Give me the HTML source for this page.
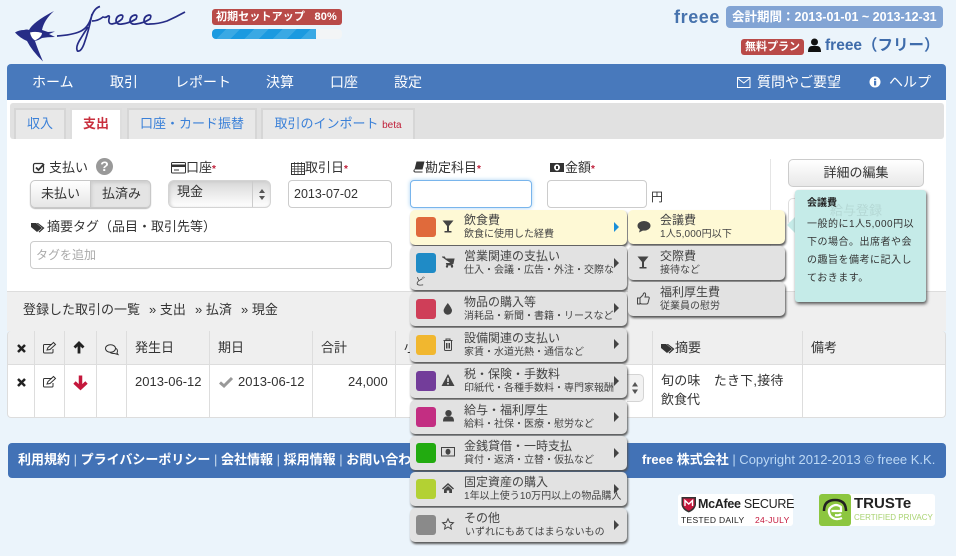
<!DOCTYPE html>
<html lang="ja"><head><meta charset="utf-8"><title>freee</title>
<style>
*{box-sizing:border-box}
html,body{margin:0;padding:0}
body{width:956px;height:556px;overflow:hidden;position:relative;background:#ebf4fb;font-family:"Liberation Sans","Noto Sans CJK JP",sans-serif;font-size:13px;color:#333;line-height:18px}
.a{position:absolute;white-space:nowrap}
.nav{left:7px;top:64px;width:939px;height:36px;background:#4879bc;border-radius:4px 4px 0 0}
.nt{color:#fff;font-size:14px;top:73px;line-height:18px}
.tab{top:108px;height:31px;background:#e8e8e8;border:2px solid #d6d6d6;border-bottom:0;color:#3a80d8;text-align:center;line-height:28px;font-size:13px}
.lbl{font-size:13px;line-height:18px;color:#333}
.req{color:#c0203a;font-size:10px;font-weight:bold}
.inp{background:#fff;border:1px solid #ccc;border-radius:4px}
.th{top:331px;height:34px;background:#efefef;border-right:1px solid #ddd;border-bottom:1px solid #ddd}
.td{top:365px;height:53px;background:#fff;border-right:1px solid #ddd;border-bottom:1px solid #ddd}
.t{font-size:13px;line-height:18px;color:#333}
.mi{left:410px;width:217px;background:#e2e2e2;border-radius:5px;box-shadow:1px 2px 2px #555;}
.mi.on,.si.on{background:#fef9d5}
.sw{left:416px;width:20px;height:20px;border-radius:3px}
.mt{left:464px;font-size:12px;line-height:14px;color:#444}
.ms{left:464px;font-size:10px;line-height:12px;color:#444}
.ar{width:0;height:0;border-left:5px solid #444;border-top:5px solid transparent;border-bottom:5px solid transparent}
.si{left:628px;width:157px;height:34px;background:#e2e2e2;border-radius:5px;box-shadow:1px 2px 2px #555}
svg{position:absolute;overflow:visible}
.ft{color:#fff;font-size:13px;font-weight:bold;line-height:16px}
</style></head><body>

<svg style="left:0;top:0" width="200" height="64" viewBox="0 0 200 64">
<path d="M15 32.500 Q19 30 24 30 Q27 29 29 30 Q33 22 54 11 Q44 20 42 30 L48 32 L55 31.500 L49 34 L55 37 Q47 37 42 38 Q39 40 35 41 Q38 50 43 61.500 Q32 51 27 41 Q20 38 15 32.500Z" fill="#262c86"/>
<path d="M30 32.500 Q36 31 42 33 Q42 37 35 40.500 Q31 38 30 32.500Z" fill="#fff"/>
<path d="M57 36 Q72 35 80 31.500 Q88 28 91 18 Q94 8 100 6.500 M92 14 Q89 30 84 44 Q81 52 77.500 51 Q75 47 81 38 Q84 33 88 27 M92 21 Q98 21 103 17 Q106 18 108 16 Q110 15 109 19 Q108 24 112 24 Q118 23 122 19 Q124 15 121 15 Q116 16 116 21 Q117 25 122 24 Q130 23 136 19 Q138 15 135 15 Q130 16 130 21 Q131 25 136 24 Q144 23 150 19 Q152 15 149 15 Q144 16 144 21 Q145 25 150 24 Q158 24 167 21 Q176 17 185 12" fill="none" stroke="#262c86" stroke-width="1.700"/>
</svg>

<div class="a" style="left:212px;top:9px;width:130px;height:16px;background:#b94a48;border-radius:3px;color:#fff;font-size:11px;font-weight:bold;line-height:16px;padding-left:4px;letter-spacing:.12px">初期セットアップ&nbsp;&nbsp;&nbsp;80%</div>
<div class="a" style="left:212px;top:29px;width:130px;height:10px;background:#f3f5f6;border-radius:4px;overflow:hidden"><div style="width:104px;height:10px;background:repeating-linear-gradient(135deg,#1b9ae0 0 10px,#3aa9e4 10px 20px)"></div></div>

<div class="a" style="left:674px;top:6px;font-size:18px;font-weight:bold;color:#4672ad;line-height:22px;letter-spacing:.6px">freee</div>
<div class="a" style="left:726px;top:6px;width:217px;height:22px;background:#82a4d4;border-radius:4px;color:#fff;font-size:12.500px;font-weight:bold;line-height:22px;padding-left:6px">会計期間：2013-01-01 ~ 2013-12-31</div>
<div class="a" style="left:741px;top:39px;width:63px;height:16px;background:#b94a48;border-radius:3px;color:#fff;font-size:11px;font-weight:bold;line-height:16px;text-align:center">無料プラン</div>
<svg style="left:808px;top:38px" width="14" height="15"><circle cx="6.500" cy="4" r="3.500" fill="#111"/><path d="M0 14 Q0 8 4 8 L9 8 Q13 8 13 14Z" fill="#111"/></svg>
<div class="a" style="left:825px;top:36px;font-size:15.500px;font-weight:bold;color:#3f6cab;line-height:20px">freee（フリー）</div>

<div class="a nav"></div>
<div class="a nt" style="left:32px">ホーム</div>
<div class="a nt" style="left:110px">取引</div>
<div class="a nt" style="left:175px">レポート</div>
<div class="a nt" style="left:266px">決算</div>
<div class="a nt" style="left:330px">口座</div>
<div class="a nt" style="left:394px">設定</div>
<svg style="left:737px;top:77px" width="14" height="11"><rect x=".5" y=".5" width="12.500" height="10" fill="none" stroke="#fff"/><path d="M1 1.500 L6.750 6 L12.500 1.500" fill="none" stroke="#fff"/></svg>
<div class="a nt" style="left:757px">質問やご要望</div>
<svg style="left:869px;top:76px" width="12" height="12"><circle cx="6" cy="6" r="5.500" fill="#fff"/><rect x="5" y="5" width="2.200" height="4.500" fill="#4879bc"/><rect x="5" y="2.500" width="2.200" height="1.800" fill="#4879bc"/></svg>
<div class="a nt" style="left:889px">ヘルプ</div>

<div class="a" style="left:7px;top:100px;width:939px;height:191px;background:#fff"></div>
<div class="a" style="left:10px;top:103px;width:934px;height:36px;background:#e1e1e1;border-radius:3px"></div>
<div class="a tab" style="left:14px;width:52px">収入</div>
<div class="a tab" style="left:70px;width:52px;background:#fff;color:#c9303e;font-weight:bold;border-color:#dedede">支出</div>
<div class="a tab" style="left:127px;width:130px">口座・カード振替</div>
<div class="a tab" style="left:261px;width:154px">取引のインポート <span style="color:#c0203a;font-size:10px">beta</span></div>

<svg style="left:33px;top:162px" width="13" height="12"><rect x=".5" y="1.500" width="10" height="9" rx="1.500" fill="none" stroke="#333" stroke-width="1.200"/><path d="M3 5.500 L5.500 8 L11 2" fill="none" stroke="#333" stroke-width="1.800"/></svg>
<div class="a lbl" style="left:49px;top:159px">支払い</div>
<div class="a" style="left:96px;top:158px;width:17px;height:17px;border-radius:50%;background:#999;color:#fff;font-weight:bold;font-size:14px;line-height:17px;text-align:center">?</div>
<div class="a" style="left:30px;top:180px;width:121px;height:28px;border:1px solid #c8c8c8;border-radius:5px;background:linear-gradient(#fff,#e6e6e6);box-shadow:0 1px 1px #bbb"></div>
<div class="a" style="left:90px;top:180px;width:61px;height:28px;border:1px solid #c8c8c8;border-radius:0 5px 5px 0;background:#e4e4e4;box-shadow:inset 1px 2px 3px #ccc"></div>
<div class="a t" style="left:41px;top:185px">未払い</div>
<div class="a t" style="left:102px;top:185px">払済み</div>

<svg style="left:171px;top:162px" width="15" height="12"><rect x=".5" y=".5" width="14" height="10.500" rx="1" fill="none" stroke="#333"/><rect x="1" y="2.500" width="13" height="2.500" fill="#333"/><path d="M3 8 H8" stroke="#333"/></svg>
<div class="a lbl" style="left:186px;top:159px">口座<span class="req">*</span></div>
<div class="a" style="left:168px;top:180px;width:103px;height:28px;border:1px solid #d4d4d4;border-radius:6px;background:linear-gradient(#d8d8d8,#fff);box-shadow:inset 1px 1px 3px #ccc"></div>
<div class="a" style="left:252px;top:181px;width:1px;height:26px;background:#ccc"></div>
<div class="a t" style="left:177px;top:183px">現金</div>
<svg style="left:258px;top:189px" width="8" height="11"><path d="M4 0 L7 4 H1Z M4 11 L7 7 H1Z" fill="#555"/></svg>

<svg style="left:291px;top:162px" width="14" height="13"><rect x=".5" y="1.500" width="13" height="11" fill="none" stroke="#333"/><path d="M.5 4.500 H13.500 M.5 7 H13.500 M.5 9.500 H13.500 M3.500 0 V12 M7 0 V12 M10.500 0 V12" stroke="#333" stroke-width=".7"/></svg>
<div class="a lbl" style="left:305px;top:159px">取引日<span class="req">*</span></div>
<div class="a inp" style="left:288px;top:180px;width:104px;height:28px"></div>
<div class="a t" style="left:294px;top:185px;font-size:12.500px">2013-07-02</div>

<svg style="left:31px;top:222px" width="14" height="11"><path d="M0 1 H5 L11 6 L6 10 L0 5Z M7 1 L13.500 6 L8.500 10.500 L7.500 9.800 L11.500 6 L5.500 1Z" fill="#333"/></svg>
<div class="a lbl" style="left:47px;top:218px">摘要タグ（品目・取引先等）</div>
<div class="a inp" style="left:30px;top:241px;width:362px;height:28px"></div>
<div class="a" style="left:36px;top:246px;color:#aaa;font-size:12px;line-height:18px">タグを追加</div>

<svg style="left:413px;top:161px" width="12" height="12"><path d="M3.500 .5 H11.500 L9.500 8.500 H1.500Z" fill="#333"/><path d="M1.500 8.500 Q.2 10.500 2 11 H9.500" fill="none" stroke="#333"/></svg>
<div class="a lbl" style="left:425px;top:159px">勘定科目<span class="req">*</span></div>
<div class="a" style="left:410px;top:180px;width:122px;height:28px;border:1px solid #79b5ec;border-radius:4px;background:#fff;box-shadow:0 0 4px #a7d0f2"></div>
<svg style="left:550px;top:163px" width="15" height="10"><rect width="14" height="9" fill="#333"/><ellipse cx="7" cy="4.500" rx="3" ry="3.200" fill="#fff"/><rect x="6" y="3" width="2" height="3" fill="#333"/></svg>
<div class="a lbl" style="left:565px;top:159px">金額<span class="req">*</span></div>
<div class="a inp" style="left:547px;top:180px;width:100px;height:28px"></div>
<div class="a t" style="left:651px;top:188px;font-size:12px">円</div>

<div class="a" style="left:770px;top:159px;width:1px;height:132px;background:#e5e5e5"></div>
<div class="a" style="left:788px;top:159px;width:136px;height:28px;border:1px solid #ccc;border-radius:5px;background:linear-gradient(#fff,#e8e8e8);text-align:center;line-height:25px;font-size:13px">詳細の編集</div>
<div class="a" style="left:788px;top:198px;width:136px;height:28px;border:1px solid #ddd;border-radius:5px;background:#fff"></div>

<div class="a" style="left:7px;top:291px;width:939px;height:40px;background:#efefef;border-top:1px solid #ddd"></div>
<div class="a t" style="left:23px;top:301px">登録した取引の一覧</div>
<div class="a t" style="left:149px;top:301px">» 支出</div>
<div class="a t" style="left:195px;top:301px">» 払済</div>
<div class="a t" style="left:241px;top:301px">» 現金</div>

<div class="a th" style="left:7px;width:28px;border-left:1px solid #ddd;border-radius:4px 0 0 0"></div>
<div class="a th" style="left:35px;width:30px"></div>
<div class="a th" style="left:65px;width:32px"></div>
<div class="a th" style="left:97px;width:30px"></div>
<div class="a th" style="left:127px;width:83px"></div>
<div class="a th" style="left:210px;width:103px"></div>
<div class="a th" style="left:313px;width:83px"></div>
<div class="a th" style="left:396px;width:257px"></div>
<div class="a th" style="left:653px;width:150px"></div>
<div class="a th" style="left:803px;width:143px;border-radius:0 4px 0 0"></div>
<div class="a td" style="left:7px;width:28px;border-left:1px solid #ddd;border-radius:0 0 0 4px"></div>
<div class="a td" style="left:35px;width:30px"></div>
<div class="a td" style="left:65px;width:32px"></div>
<div class="a td" style="left:97px;width:30px"></div>
<div class="a td" style="left:127px;width:83px"></div>
<div class="a td" style="left:210px;width:103px"></div>
<div class="a td" style="left:313px;width:83px"></div>
<div class="a td" style="left:396px;width:257px"></div>
<div class="a td" style="left:653px;width:150px"></div>
<div class="a td" style="left:803px;width:143px;border-radius:0 0 4px 0"></div>

<svg style="left:17px;top:344px" width="9" height="9"><path d="M1 1 L8 8 M8 1 L1 8" stroke="#222" stroke-width="2.500"/></svg>
<svg style="left:17px;top:378px" width="9" height="9"><path d="M1 1 L8 8 M8 1 L1 8" stroke="#222" stroke-width="2.500"/></svg>
<svg style="left:43px;top:342px" width="13" height="12"><path d="M9 2.500 H1.500 Q.5 2.500 .5 3.500 V10 Q.5 11 1.500 11 H9 Q10 11 10 10 V7" fill="none" stroke="#333"/><path d="M4 8 L5 5.500 L10.500 .5 L12.500 2.500 L7 7.500Z" fill="none" stroke="#333"/></svg>
<svg style="left:43px;top:376px" width="13" height="12"><path d="M9 2.500 H1.500 Q.5 2.500 .5 3.500 V10 Q.5 11 1.500 11 H9 Q10 11 10 10 V7" fill="none" stroke="#333"/><path d="M4 8 L5 5.500 L10.500 .5 L12.500 2.500 L7 7.500Z" fill="none" stroke="#333"/></svg>
<svg style="left:73px;top:341px" width="12" height="13"><path d="M6 12.500 V2 M1.500 6.500 L6 2 L10.500 6.500" fill="none" stroke="#222" stroke-width="2.800"/></svg>
<svg style="left:73px;top:375px" width="15" height="15"><path d="M7.500 .5 V12.500 M1.500 7.500 L7.500 13 L13.500 7.500" fill="none" stroke="#c4183c" stroke-width="3.500"/></svg>
<svg style="left:105px;top:344px" width="14" height="11"><ellipse cx="5.500" cy="4.500" rx="5" ry="3.800" fill="#efefef" stroke="#333"/><path d="M10.500 4 Q13.500 6 12 9 L13 10.500 L9.500 9.500 Q6.500 9.500 5 8.300" fill="none" stroke="#333"/></svg>

<div class="a t" style="left:135px;top:339px">発生日</div>
<div class="a t" style="left:218px;top:339px">期日</div>
<div class="a t" style="left:321px;top:339px">合計</div>
<div class="a t" style="left:404px;top:339px">小</div>
<svg style="left:661px;top:343px" width="15" height="11"><path d="M0 1 H5 L11 6 L6 10 L0 5Z M7 1 L13.500 6 L8.500 10.500 L7.500 9.800 L11.500 6 L5.500 1Z" fill="#333"/></svg>
<div class="a t" style="left:675px;top:339px">摘要</div>
<div class="a t" style="left:811px;top:339px">備考</div>

<div class="a t" style="left:135px;top:373px">2013-06-12</div>
<svg style="left:219px;top:377px" width="14" height="11"><path d="M1 5.500 L5 9 L13 1" fill="none" stroke="#999" stroke-width="3"/></svg>
<div class="a t" style="left:238px;top:373px">2013-06-12</div>
<div class="a t" style="left:348px;top:373px">24,000</div>
<div class="a t" style="left:661px;top:372px;letter-spacing:.2px;font-size:13px">旬の味　たき下,接待</div>
<div class="a t" style="left:661px;top:391px">飲食代</div>
<div class="a" style="left:627px;top:374px;width:17px;height:28px;background:#f2f2f2;border:1px solid #d4d4d4;border-left:0;border-radius:0 5px 5px 0"></div>
<svg style="left:631px;top:382px" width="8" height="12"><path d="M4 0 L7 4.500 H1Z M4 12 L7 7.500 H1Z" fill="#555"/></svg>

<div class="a" style="left:8px;top:443px;width:938px;height:35px;background:#4272b6;border-radius:4px"></div>
<div class="a ft" style="left:18px;top:452px">利用規約 <span style="font-weight:normal;color:#cde">|</span> プライバシーポリシー <span style="font-weight:normal;color:#cde">|</span> 会社情報 <span style="font-weight:normal;color:#cde">|</span> 採用情報 <span style="font-weight:normal;color:#cde">|</span> お問い合わせ</div>
<div class="a ft" style="left:642px;top:452px">freee 株式会社 <span style="font-weight:normal;color:#bcd8f5">| Copyright 2012-2013 © freee K.K.</span></div>

<div class="a" style="left:678px;top:494px;width:115px;height:32px;background:#fff;border-radius:3px"></div>
<svg style="left:681px;top:496px" width="16" height="17"><path d="M.5 1 H15 V9 Q14 14 7.750 16.500 Q1.500 14 .5 9Z" fill="#333"/><path d="M2 2.500 H13.500 V9 Q12.500 12.500 7.750 14.800 Q3 12.500 2 9Z" fill="#c4183c"/><path d="M4 10 V4.500 L7.750 8 L11.500 4.500 V10" fill="none" stroke="#fff" stroke-width="1.400"/></svg>
<div class="a" style="left:698px;top:496px;font-size:12.500px;font-weight:bold;color:#222;line-height:16px;letter-spacing:-.3px">McAfee <span style="font-weight:normal">SECURE</span></div>
<div class="a" style="left:681px;top:515px;font-size:8.500px;color:#222;line-height:11px;letter-spacing:.3px">TESTED DAILY</div>
<div class="a" style="left:755px;top:515px;font-size:8.500px;color:#c4183c;line-height:11px;letter-spacing:.3px">24-JULY</div>

<div class="a" style="left:819px;top:494px;width:116px;height:32px;background:#fff;border-radius:3px"></div>
<div class="a" style="left:819px;top:494px;width:32px;height:32px;background:#8cc63f;border-radius:3px"></div>
<svg style="left:822px;top:497px" width="26" height="26"><path d="M2 14 Q2 3 13 3 Q24 3 24 14" fill="none" stroke="#222" stroke-width="2.500"/><path d="M20 21 Q13 24 8.500 19 Q5 13 9 10 Q14 6 19 10 L19 14 H9.500 M13 18 Q17 19 19 17" fill="none" stroke="#fff" stroke-width="2.200"/></svg>
<div class="a" style="left:854px;top:495px;font-size:15px;font-weight:bold;color:#222;line-height:18px">TRUSTe</div>
<div class="a" style="left:854px;top:513px;font-size:8px;color:#a9d372;line-height:10px">CERTIFIED PRIVACY</div>

<!-- main dropdown -->
<div class="a mi on" style="top:210px;height:35px"></div>
<div class="a mi" style="top:246px;height:44px"></div>
<div class="a mi" style="top:292px;height:34px"></div>
<div class="a mi" style="top:328px;height:34px"></div>
<div class="a mi" style="top:364px;height:34px"></div>
<div class="a mi" style="top:400px;height:34px"></div>
<div class="a mi" style="top:436px;height:34px"></div>
<div class="a mi" style="top:472px;height:34px"></div>
<div class="a mi" style="top:508px;height:34px"></div>

<div class="a sw" style="top:217px;background:#e06a3b"></div>
<div class="a sw" style="top:253px;background:#1f8bc6"></div>
<div class="a sw" style="top:299px;background:#cf3e58"></div>
<div class="a sw" style="top:335px;background:#f1b72f"></div>
<div class="a sw" style="top:371px;background:#733d9a"></div>
<div class="a sw" style="top:407px;background:#c32e82"></div>
<div class="a sw" style="top:443px;background:#22ab10"></div>
<div class="a sw" style="top:479px;background:#b3d133"></div>
<div class="a sw" style="top:515px;background:#8a8a8a"></div>

<svg style="left:442px;top:220px" width="12" height="13"><path d="M.5 .5 H11.500 L7 6 V11 H9.500 V12.500 H2.500 V11 H5 V6Z" fill="#444"/></svg>
<svg style="left:442px;top:256px" width="13" height="12"><path d="M0 1 H2.500 L3.500 3 H12 L11 7.500 H4.500 L5 9 H11" fill="#444" stroke="#444"/><circle cx="5" cy="10.500" r="1.200" fill="#444"/><circle cx="10" cy="10.500" r="1.200" fill="#444"/></svg>
<svg style="left:443px;top:302px" width="10" height="13"><path d="M4.800 1 Q9 6.500 9 8.500 A4.200 4.200 0 0 1 .6 8.500 Q.6 6.500 4.800 1Z" fill="#444"/></svg>
<svg style="left:443px;top:338px" width="10" height="13"><path d="M.5 2.500 H9.500 M3 2.500 V1 H7 V2.500 M1.500 2.500 V11.500 Q1.500 12.500 2.500 12.500 H7.500 Q8.500 12.500 8.500 11.500 V2.500 M3.500 5 V10.500 M5 5 V10.500 M6.500 5 V10.500" fill="none" stroke="#444"/></svg>
<svg style="left:441px;top:374px" width="14" height="12"><path d="M7 0 L13.500 12 H.5Z" fill="#444"/><rect x="6.200" y="3.800" width="1.600" height="4.200" fill="#e2e2e2"/><rect x="6.200" y="9" width="1.600" height="1.600" fill="#e2e2e2"/></svg>
<svg style="left:443px;top:410px" width="11" height="12"><circle cx="5.500" cy="3.200" r="3.200" fill="#444"/><path d="M0 11.500 Q0 6.500 3 6.500 H8 Q11 6.500 11 11.500Z" fill="#444"/></svg>
<svg style="left:441px;top:447px" width="14" height="10"><rect width="14" height="9.500" fill="#444"/><rect x="1" y="1" width="12" height="7.500" fill="#ddd"/><ellipse cx="7" cy="4.700" rx="2.500" ry="3" fill="#444"/></svg>
<svg style="left:442px;top:483px" width="12" height="10"><path d="M0 5.500 L6 0 L12 5.500 L11 6.500 L6 2 L1 6.500Z M2 6.500 L6 3 L10 6.500 V10 H7.200 V7.500 H4.800 V10 H2Z" fill="#444"/></svg>
<svg style="left:442px;top:518px" width="12" height="12"><path d="M6 .8 L7.600 4.300 L11.400 4.700 L8.600 7.200 L9.400 11 L6 9 L2.600 11 L3.400 7.200 L.6 4.700 L4.400 4.300Z" fill="none" stroke="#444"/></svg>

<div class="a mt" style="top:213px">飲食費</div><div class="a ms" style="top:229px">飲食に使用した経費</div>
<div class="a mt" style="top:249px">営業関連の支払い</div><div class="a ms" style="top:265px">仕入・会議・広告・外注・交際な</div><div class="a ms" style="left:415px;top:277px">ど</div>
<div class="a mt" style="top:295px">物品の購入等</div><div class="a ms" style="top:311px">消耗品・新聞・書籍・リースなど</div>
<div class="a mt" style="top:331px">設備関連の支払い</div><div class="a ms" style="top:347px">家賃・水道光熱・通信など</div>
<div class="a mt" style="top:367px">税・保険・手数料</div><div class="a ms" style="top:383px">印紙代・各種手数料・専門家報酬</div>
<div class="a mt" style="top:403px">給与・福利厚生</div><div class="a ms" style="top:419px">給料・社保・医療・慰労など</div>
<div class="a mt" style="top:439px">金銭貸借・一時支払</div><div class="a ms" style="top:455px">貸付・返済・立替・仮払など</div>
<div class="a mt" style="top:475px">固定資産の購入</div><div class="a ms" style="top:491px;letter-spacing:.05px">1年以上使う10万円以上の物品購入</div>
<div class="a mt" style="top:511px">その他</div><div class="a ms" style="top:527px;left:465px">いずれにもあてはまらないもの</div>

<div class="a ar" style="left:614px;top:222px;border-left-color:#1a8fd8"></div>
<div class="a ar" style="left:614px;top:258px"></div>
<div class="a ar" style="left:614px;top:303px"></div>
<div class="a ar" style="left:614px;top:339px"></div>
<div class="a ar" style="left:614px;top:376px"></div>
<div class="a ar" style="left:614px;top:412px"></div>
<div class="a ar" style="left:614px;top:448px"></div>
<div class="a ar" style="left:614px;top:484px"></div>
<div class="a ar" style="left:614px;top:520px"></div>

<!-- sub menu -->
<div class="a si on" style="top:210px"></div>
<div class="a si" style="top:246px"></div>
<div class="a si" style="top:282px"></div>
<svg style="left:637px;top:221px" width="14" height="12"><ellipse cx="7" cy="4.800" rx="6.500" ry="4.800" fill="#444"/><path d="M3 8 L2 11.500 L7 9Z" fill="#444"/></svg>
<svg style="left:637px;top:256px" width="12" height="13"><path d="M.5 .5 H11.500 L7 6 V11 H9.500 V12.500 H2.500 V11 H5 V6Z" fill="#444"/></svg>
<svg style="left:637px;top:292px" width="13" height="13"><path d="M.5 6 H3 V12 H.5Z M3 6 L6 3 Q6.500 .5 8 1 Q9.200 2 8 5 H11.500 Q12.800 5.500 12 7 L11 11 Q10.500 12 9.500 12 H4.500 L3 11" fill="none" stroke="#444"/></svg>
<div class="a mt" style="left:660px;top:213px">会議費</div><div class="a ms" style="left:660px;top:229px;letter-spacing:.15px">1人5,000円以下</div>
<div class="a mt" style="left:660px;top:249px">交際費</div><div class="a ms" style="left:660px;top:265px">接待など</div>
<div class="a mt" style="left:660px;top:285px">福利厚生費</div><div class="a ms" style="left:660px;top:301px">従業員の慰労</div>

<!-- popover -->
<div class="a" style="left:787px;top:217px;width:0;height:0;border-right:8px solid #c5ebe8;border-top:8px solid transparent;border-bottom:8px solid transparent"></div>
<div class="a" style="left:795px;top:190px;width:131px;height:112px;background:#c5ebe8;border-radius:3px;box-shadow:1px 2px 3px #555"></div>
<div class="a" style="left:830px;top:202px;font-size:13px;color:#b5d8d5;line-height:18px">給与登録</div>
<div class="a" style="left:807px;top:197px;font-size:10px;font-weight:bold;color:#222;line-height:14px">会議費</div>
<div class="a" style="left:807px;top:216px;font-size:10px;color:#333;line-height:18px;white-space:normal;width:118px;letter-spacing:.5px">一般的に1人5,000円以<br>下の場合。出席者や会<br>の趣旨を備考に記入し<br>ておきます。</div>

</body></html>
